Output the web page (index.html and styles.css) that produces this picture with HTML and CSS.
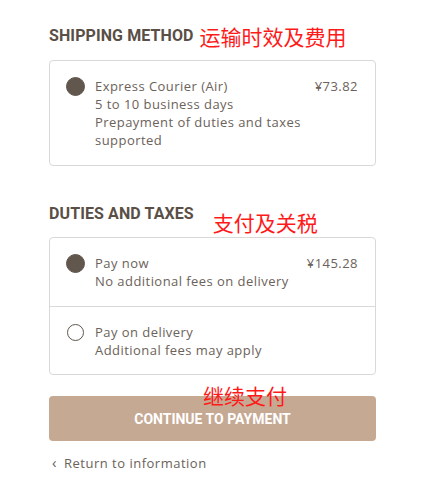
FILE: index.html
```html
<!DOCTYPE html>
<html lang="en">
<head>
  <meta charset="UTF-8">
  <meta name="viewport" content="width=device-width, initial-scale=1.0">
  <title>Shipping</title>
  <link rel="stylesheet" href="styles.css">
</head>
<body>
  <div class="checkout">
    <div class="section-head">
      <h2>SHIPPING METHOD</h2>
      <span class="note note-ship">运输时效及费用</span>
    </div>
    <div class="box">
      <div class="option">
        <span class="radio checked"></span>
        <div class="option-text">
          <div>Express Courier (Air)</div>
          <div>5 to 10 business days</div>
          <div>Prepayment of duties and taxes supported</div>
        </div>
        <span class="price">¥73.82</span>
      </div>
    </div>

    <div class="section-head duties">
      <h2>DUTIES AND TAXES</h2>
      <span class="note note-duty">支付及关税</span>
    </div>
    <div class="box">
      <div class="option">
        <span class="radio checked"></span>
        <div class="option-text">
          <div>Pay now</div>
          <div>No additional fees on delivery</div>
        </div>
        <span class="price">¥145.28</span>
      </div>
      <div class="option">
        <span class="radio"></span>
        <div class="option-text">
          <div>Pay on delivery</div>
          <div>Additional fees may apply</div>
        </div>
      </div>
    </div>

    <div class="actions">
      <span class="note note-pay">继续支付</span>
      <button class="pay-btn">CONTINUE TO PAYMENT</button>
    </div>
    <a class="back" href="#"><span class="chev">‹</span>Return to information</a>
  </div>
</body>
</html>
```

FILE: styles.css
```css
body {
  margin: 0;
  font-family: "Open Sans", "Noto Sans", sans-serif;
  color: #6b625a;
  background: #fff;
}
.checkout {
  width: 327px;
  margin-left: 49px;
  padding-top: 24px;
}
.section-head {
  display: flex;
  align-items: flex-start;
  height: 36px;
  white-space: nowrap;
}
.section-head h2 {
  margin: 0;
  font-family: Roboto, sans-serif;
  font-weight: bold;
  font-size: 16px;
  letter-spacing: 0.1px;
  color: #5a4f46;
  line-height: 23px;
}
.note {
  font-family: "Noto Sans CJK SC", sans-serif;
  color: #ff1a1a;
  font-size: 21px;
  line-height: 24px;
}
.note-ship {
  margin-left: 6px;
}
.section-head.duties {
  margin-top: 36px;
  height: 35px;
}
.note-duty {
  margin-left: 19px;
  margin-top: 8px;
}
.box {
  border: 1px solid #d9d9d9;
  border-radius: 4px;
}
.option {
  display: flex;
  align-items: flex-start;
  padding: 16px 17px 16px 16px;
  font-size: 13px;
  line-height: 18px;
  letter-spacing: 0.45px;
}
.option + .option {
  border-top: 1px solid #d9d9d9;
  padding-bottom: 15px;
}
.radio {
  flex: none;
  width: 17px;
  height: 17px;
  border: 1px solid #5f554d;
  border-radius: 50%;
  margin: 1px 11px 0 1px;
  box-sizing: border-box;
}
.radio.checked {
  background: #62574d;
  width: 19px;
  height: 19px;
  margin: 0 10px 0 0;
}
.option-text {
  flex: 1;
  padding-right: 50px;
}
.price {
  flex: none;
  margin-left: -50px;
}
.actions {
  position: relative;
  margin-top: 21px;
}
.note-pay {
  position: absolute;
  left: 154px;
  top: -13px;
}
.pay-btn {
  display: block;
  width: 100%;
  height: 45px;
  border: none;
  border-radius: 4px;
  background: #c6a993;
  color: #fff;
  font-family: Roboto, sans-serif;
  font-weight: bold;
  font-size: 14px;
  letter-spacing: 0;
}
.back {
  display: block;
  margin-top: 12px;
  color: #6b625a;
  text-decoration: none;
  font-size: 13px;
  letter-spacing: 0.5px;
  line-height: 18px;
}
.chev {
  display: inline-block;
  width: 12px;
  padding-left: 3px;
  font-size: 15px;
}
```
